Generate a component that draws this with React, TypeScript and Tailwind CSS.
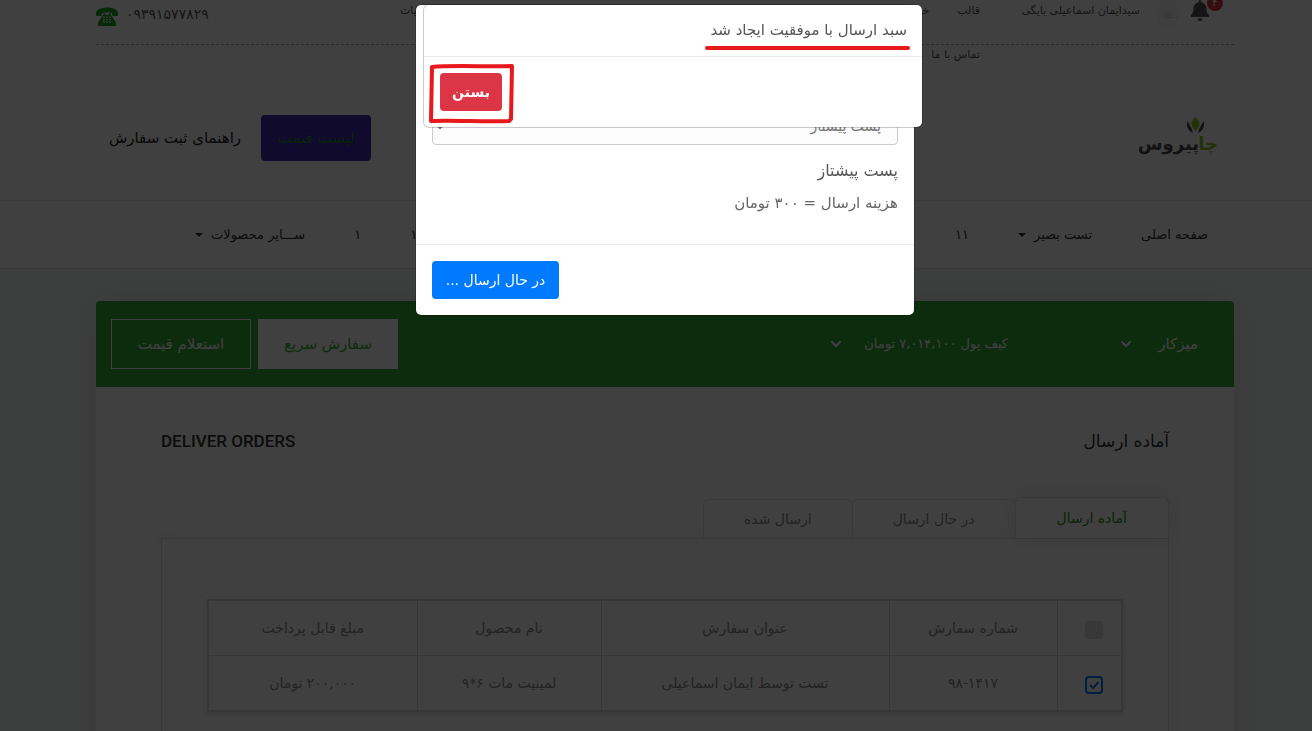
import React, { useState } from 'react';
import { Camera, ChevronDown } from 'lucide-react';
import { FaBell } from 'react-icons/fa';

interface Order {
    id: string;
    title: string;
    product: string;
    price: string;
}

const orders: Order[] = [
    { id: '۹۸-۱۴۱۷', title: 'تست توسط ایمان اسماعیلی', product: 'لمینیت مات ۶*۹', price: '۲۰۰,۰۰۰ تومان' },
];

const tabs = ['آماده ارسال', 'در حال ارسال', 'ارسال شده'];

const Caret: React.FC = () => (
    <svg className="w-2 h-1" viewBox="0 0 8 4" fill="currentColor">
        <path d="M0 0h8L4 4z" />
    </svg>
);

const PhoneIcon: React.FC = () => (
    <svg className="w-[22px] h-[19px] text-[#1fa32b]" viewBox="0 0 22 19" fill="currentColor">
        <path d="M0 6.6C0 2.6 4.4.4 11 .4s11 2.200 11 6.200v1.500c0 .6-.4 1-1 1h-3.800c-.6 0-1-.4-1-1V6.400c-1.400-.6-3.200-.8-5.200-.8s-3.800.2-5.200.8v1.700c0 .6-.4 1-1 1H1c-.6 0-1-.4-1-1z" />
        <path d="M7.500 6.500h1.500v1.300h4V6.500h1.500v1.300c.8.3 1.200.9 1.600 1.700l3.400 5.200c.4.700.5 1.200.5 2v1.500c0 .5-.3.800-.8.800H2.800c-.5 0-.8-.3-.8-.8v-1.500c0-.8.1-1.300.5-2l3.400-5.200c.4-.8.8-1.400 1.600-1.700z" />
        <g fill="#fff">
            {[9.5, 12, 14.5].map(y => [7.2, 10.2, 13.2].map(x => (
                <rect key={`${x}-${y}`} x={x} y={y} width="1.6" height="1.4" />
            )))}
        </g>
    </svg>
);

const Logo: React.FC = () => (
    <svg className="w-20 h-12" viewBox="0 0 80 48" role="img" aria-label="چاپیروس">
        <path d="M56.500 3c3 3 4 5 4 7s-1.500 4.500-4 7c-2.500-2.500-4-5-4-7s1-4 4-7z" fill="#8cc21f" />
        <path d="M48.500 7c-1.500 4.500-.3 9 5 12 .2-4.500-1.500-5-5-12zM64.500 7c1.500 4.500.3 9-5 12-.2-4.500 1.500-5 5-12z" fill="#4a4a4a" />
        <g fontFamily="DejaVu Sans, sans-serif" fontWeight="700" fontSize="18" direction="rtl">
            <text x="79" y="36" fill="#8cc21f">چا</text>
            <text x="60" y="36" fill="#4a4a4a">پیروس</text>
        </g>
    </svg>
);

const TopBar: React.FC = () => (
    <div className="flex items-start h-[45px] border-b border-dashed border-[#a8a8a8] text-[#555]">
        <div className="flex items-start w-[254px] shrink-0 pr-3">
            <button type="button" aria-label="اعلان‌ها" className="relative w-6 flex justify-start mr-3">
                <FaBell className="w-5 h-[21px] text-[#555]" />
                <span className="absolute -top-[5px] -right-[13px] w-4 h-4 rounded-full bg-[#dc3545] text-white text-[10px] leading-4 text-center">۴</span>
            </button>
            <span className="w-6 h-6 mt-[2px] mr-[6px] rounded-full bg-[#f8f8f8] text-[#bbb] flex items-center justify-center">
                <Camera size={9} />
            </span>
            <a href="#profile" className="mr-4 text-[11px] leading-[22px] whitespace-nowrap">سیدایمان اسماعیلی بایگی</a>
        </div>
        <ul className="flex flex-wrap content-start justify-between gap-y-[22px] w-[580px] text-[11px] leading-[22px]">
            <li className="flex gap-7"><a href="#theme">قالب</a><a href="#services">خدمات</a></li>
            <li><a href="#notes">تجربیات</a></li>
            <li className="w-full"><a href="#contact">تماس با ما</a></li>
        </ul>
        <a href="tel:09391577829" className="mr-auto flex items-center gap-2 pt-1 text-sm">
            <span className="leading-5 pb-1">۰۹۳۹۱۵۷۷۸۲۹</span>
            <PhoneIcon />
        </a>
    </div>
);

const NavBar: React.FC = () => (
    <nav className="bg-white border-y border-[#e6e6e6] pl-[18px]">
        <div className="max-w-[1138px] mx-auto h-[67px] pl-[99px] pr-[26px] flex items-center justify-between text-[13px] text-[#333]">
            <div className="flex items-center gap-[49px]">
                <a href="#home">صفحه اصلی</a>
                <a href="#basir" className="flex items-center gap-2">تست بصیر <Caret /></a>
                <a href="#11">۱۱</a>
            </div>
            <div className="flex items-center gap-[49px]">
                <a href="#1">۱</a>
                <a href="#2">۱</a>
                <a href="#more" className="flex items-center gap-2">ســـایر محصولات <Caret /></a>
            </div>
        </div>
    </nav>
);

const OrdersTable: React.FC = () => (
    <table className="w-full table-fixed border-collapse border-2 border-[#d8d8d8] shadow-[0_2px_6px_rgba(0,0,0,0.15)] text-center text-sm text-[#8c8c8c]">
        <colgroup>
            <col className="w-[65px]" />
            <col className="w-[168px]" />
            <col className="w-[288px]" />
            <col className="w-[184px]" />
            <col />
        </colgroup>
        <thead>
            <tr className="h-[55px]">
                <th className="border border-[#d8d8d8]">
                    <input type="checkbox" aria-label="انتخاب همه" className="appearance-none block mr-[18px] mt-1 w-[18px] h-[18px] rounded-sm bg-[#dedede]" />
                </th>
                <th className="border border-[#d8d8d8] font-normal">شماره سفارش</th>
                <th className="border border-[#d8d8d8] font-normal">عنوان سفارش</th>
                <th className="border border-[#d8d8d8] font-normal">نام محصول</th>
                <th className="border border-[#d8d8d8] font-normal">مبلغ قابل پرداخت</th>
            </tr>
        </thead>
        <tbody>
            {orders.map(order => (
                <tr key={order.id} className="h-14">
                    <td className="border border-[#d8d8d8]">
                        <span className="relative block mr-[18px] mt-1 w-[18px] h-[18px]">
                            <input type="checkbox" defaultChecked aria-label={order.id} className="appearance-none block w-full h-full rounded-sm border-2 border-[#007bff]" />
                            <svg className="absolute inset-0 pointer-events-none" viewBox="0 0 18 18" fill="none" stroke="#007bff" strokeWidth="2">
                                <path d="M5 9l3 3 5.500-6" />
                            </svg>
                        </span>
                    </td>
                    <td className="border border-[#d8d8d8]"><bdi dir="ltr">{order.id}</bdi></td>
                    <td className="border border-[#d8d8d8]">{order.title}</td>
                    <td className="border border-[#d8d8d8]">{order.product}</td>
                    <td className="border border-[#d8d8d8]">{order.price}</td>
                </tr>
            ))}
        </tbody>
    </table>
);

const OrdersCard: React.FC = () => (
    <section className="max-w-[1140px] mx-auto mt-8 min-h-[600px] rounded-t bg-white border-x border-[#eee] shadow-[0_0_40px_rgba(90,30,60,0.12)]">
        <header className="flex items-center h-[86px] rounded-t bg-[#34b034] text-white text-[15px] pl-[15px] pr-9">
            <button type="button" className="flex items-center justify-between w-20">
                <span>میزکار</span>
                <ChevronDown size={16} strokeWidth={3} />
            </button>
            <button type="button" className="flex items-center gap-5 mr-[110px] text-[13px]">
                <span>کیف پول ۷,۰۱۴,۱۰۰ تومان</span>
                <ChevronDown size={16} strokeWidth={3} />
            </button>
            <div className="flex gap-[7px] mr-auto">
                <button type="button" className="w-[140px] h-[50px] bg-white text-[#34b034]">سفارش سریع</button>
                <button type="button" className="w-[140px] h-[50px] border border-white">استعلام قیمت</button>
            </div>
        </header>

        <div className="px-[65px] pt-10">
            <div className="flex items-center justify-between h-7 text-[#333]">
                <h1 className="text-[17px]">آماده ارسال</h1>
                <span className="font-[Roboto,sans-serif] font-medium text-[17px]">DELIVER ORDERS</span>
            </div>
            <div className="flex items-end mt-[42px] text-sm text-[#8c8c8c]">
                {tabs.map((tab, i) => (
                    <button
                        key={tab}
                        type="button"
                        className={i === 0
                            ? 'h-[41px] px-[41px] rounded-t-md border border-b-0 border-[#e0e0e0] bg-white text-[#34882a] shadow-[0_0_20px_rgba(0,0,0,0.12)]'
                            : 'h-[39px] px-10 rounded-t-md border border-r-0 border-b-0 border-[#e0e0e0]'}
                    >
                        {tab}
                    </button>
                ))}
            </div>
            <div className="min-h-[300px] border border-[#e0e0e0] px-[45px] pt-[60px] shadow-[0_0_20px_rgba(0,0,0,0.06)]">
                <OrdersTable />
            </div>
        </div>
    </section>
);

const SendModal: React.FC = () => (
    <div role="dialog" aria-label="ارسال سفارش" className="max-w-[500px] mx-auto mt-1 rounded-md border border-black/20 bg-clip-padding bg-white text-[#555]">
        <div className="px-4 pt-[102px] pb-[29px]">
            <select aria-label="روش ارسال" className="block w-full h-[38px] px-3 rounded-sm border border-[#ccc] bg-[#fcfcfc] text-sm text-[#777]">
                <option>پست پیشتاز</option>
            </select>
            <h3 className="mt-[14px] text-base leading-6">پست پیشتاز</h3>
            <p className="mt-2 text-[15px] leading-6 text-[#666]">هزینه ارسال = ۳۰۰ تومان</p>
        </div>
        <div className="flex justify-end border-t border-[#e9ecef] p-4">
            <button type="button" className="w-[127px] h-[38px] rounded bg-[#007bff] text-white text-sm">در حال ارسال ...</button>
        </div>
    </div>
);

const SuccessModal: React.FC<{ onClose: () => void }> = ({ onClose }) => (
    <div role="alertdialog" aria-labelledby="success-title" className="max-w-[500px] mx-auto mt-1 rounded-md border border-black/20 bg-clip-padding bg-white text-[#555]">
        <div className="h-[52px] px-[15px] pt-[13px] border-b border-[#e9ecef]">
            <h2 id="success-title" className="relative w-fit text-[15px] leading-6">
                سبد ارسال با موفقیت ایجاد شد
                <span className="absolute -right-[3px] -left-[5px] -bottom-2 h-1 rounded-full bg-[#e8191c]"></span>
            </h2>
        </div>
        <div className="flex justify-end p-4">
            <div className="relative">
                <button type="button" onClick={onClose} className="w-[62px] h-[38px] rounded bg-[#dc3545] text-white text-sm font-bold">بستن</button>
                <svg className="absolute -left-[11px] -top-[10px] w-[86px] h-[61px] pointer-events-none" viewBox="0 0 86 61" fill="none" stroke="#e8191c" strokeWidth="4" strokeLinecap="round" strokeLinejoin="round">
                    <path d="M3 4C22 2 62 4 83 3M83 3L82 56L80 58C55 59 25 57 2 58M2 58L3 4" />
                </svg>
            </div>
        </div>
    </div>
);

const App: React.FC = () => {
    const [showSuccess, setShowSuccess] = useState(true);

    return (
        <div dir="rtl" className="h-screen overflow-hidden bg-[#f3f8f7] font-['DejaVu_Sans',sans-serif] leading-6">
            <div className="bg-white pl-[18px]">
                <header className="max-w-[1138px] mx-auto">
                    <TopBar />
                    <div className="flex items-center justify-between h-[155px] pt-[30px] pr-[15px] pl-[13px]">
                        <Logo />
                        <div className="flex items-center gap-5 text-[15px] text-[#222]">
                            <a href="#prices" className="w-[110px] h-[46px] leading-[46px] text-center rounded-sm bg-[#4028b0] text-[#1f8a2b]">لیست قیمت</a>
                            <a href="#guide">راهنمای ثبت سفارش</a>
                        </div>
                    </div>
                </header>
            </div>
            <NavBar />
            <div className="pl-[18px]">
                <OrdersCard />
            </div>

            <div className="fixed inset-0 bg-black/75"></div>
            <div className="fixed inset-0 pl-[18px]"><SendModal /></div>
            {showSuccess && (
                <div className="fixed inset-0 pl-[34px]"><SuccessModal onClose={() => setShowSuccess(false)} /></div>
            )}
        </div>
    );
};

export default App;
